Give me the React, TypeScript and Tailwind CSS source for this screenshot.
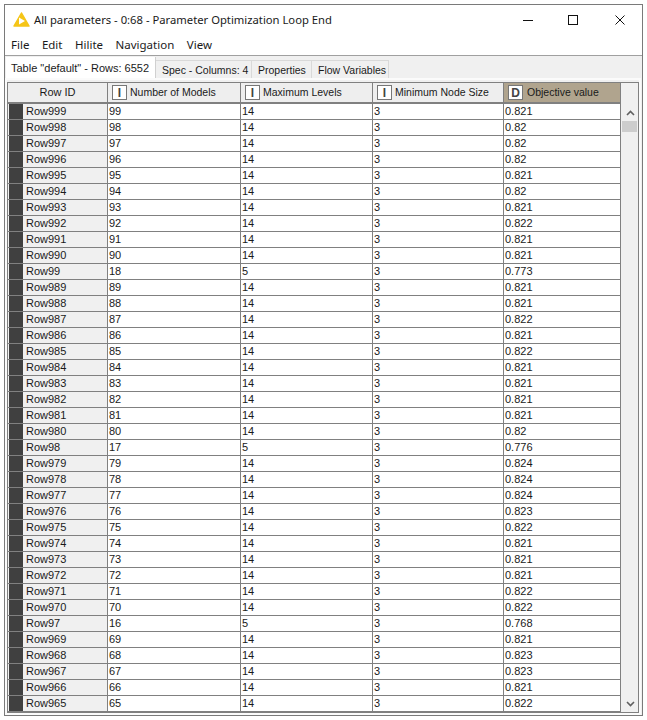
import React from 'react';

const rows: [string, string, string, string][] = [
  ['Row999', '99', '14', '0.821'],
  ['Row998', '98', '14', '0.82'],
  ['Row997', '97', '14', '0.82'],
  ['Row996', '96', '14', '0.82'],
  ['Row995', '95', '14', '0.821'],
  ['Row994', '94', '14', '0.82'],
  ['Row993', '93', '14', '0.821'],
  ['Row992', '92', '14', '0.822'],
  ['Row991', '91', '14', '0.821'],
  ['Row990', '90', '14', '0.821'],
  ['Row99', '18', '5', '0.773'],
  ['Row989', '89', '14', '0.821'],
  ['Row988', '88', '14', '0.821'],
  ['Row987', '87', '14', '0.822'],
  ['Row986', '86', '14', '0.821'],
  ['Row985', '85', '14', '0.822'],
  ['Row984', '84', '14', '0.821'],
  ['Row983', '83', '14', '0.821'],
  ['Row982', '82', '14', '0.821'],
  ['Row981', '81', '14', '0.821'],
  ['Row980', '80', '14', '0.82'],
  ['Row98', '17', '5', '0.776'],
  ['Row979', '79', '14', '0.824'],
  ['Row978', '78', '14', '0.824'],
  ['Row977', '77', '14', '0.824'],
  ['Row976', '76', '14', '0.823'],
  ['Row975', '75', '14', '0.822'],
  ['Row974', '74', '14', '0.821'],
  ['Row973', '73', '14', '0.821'],
  ['Row972', '72', '14', '0.821'],
  ['Row971', '71', '14', '0.822'],
  ['Row970', '70', '14', '0.822'],
  ['Row97', '16', '5', '0.768'],
  ['Row969', '69', '14', '0.821'],
  ['Row968', '68', '14', '0.823'],
  ['Row967', '67', '14', '0.823'],
  ['Row966', '66', '14', '0.821'],
  ['Row965', '65', '14', '0.822'],
];

const TypeBox = ({ letter }: { letter: string }) => (
  <span className="flex h-[15px] w-[15px] shrink-0 items-center justify-center border border-[#777] bg-white text-[12px] font-bold leading-none text-[#444]">
    {letter}
  </span>
);

const HeaderCell = ({ letter, label, width, active }: { letter: string; label: string; width: string; active?: boolean }) => (
  <div
    className={`flex h-[21px] shrink-0 items-center border-r border-b-2 border-[#808080] pl-[4px] text-[10.5px] ${width} ${active ? 'gap-[4px] bg-[#b0a48e]' : 'gap-[3px] bg-[#eeeeee]'}`}
  >
    <TypeBox letter={letter} />
    <span className="-mt-[2px] whitespace-nowrap">{label}</span>
  </div>
);

const App = () => {
  return (
    <div className="h-[720px] w-[647px] overflow-hidden bg-white pt-1 pl-1 text-[11px] leading-4 text-[#1a1a1a] [font-family:'Liberation_Sans',Arial,sans-serif]">
      <div className="h-[712px] w-[639px] overflow-hidden border border-[#7a7a7a] bg-[#f0f0f0]">
        {/* title bar */}
        <div className="flex h-[29px] items-center bg-white pl-[8px]">
          <svg width="17" height="15" viewBox="0 0 17 15" className="mt-[-1px] shrink-0">
            <path d="M8.5 1 L16 14 H1 Z" fill="#f5c518" stroke="#f5c518" strokeWidth="1.5" strokeLinejoin="round" />
            <path d="M6 5.5 L12 9 L6 12.5 Z" fill="#fff" />
          </svg>
          <span className="ml-[4px] text-[11.25px] [font-family:'Noto_Sans',sans-serif]">All parameters - 0:68 - Parameter Optimization Loop End</span>
          <div className="ml-auto flex items-center pr-[17px]">
            <svg width="10" height="10" viewBox="0 0 10 10" className="mr-[35px]">
              <path d="M0 5.5 H10" stroke="#111" strokeWidth="1" />
            </svg>
            <svg width="10" height="10" viewBox="0 0 10 10" className="mr-[37px]">
              <rect x="0.5" y="0.5" width="9" height="9" fill="none" stroke="#111" />
            </svg>
            <svg width="10" height="10" viewBox="0 0 10 10">
              <path d="M0.5 0.5 L9.5 9.5 M9.5 0.5 L0.5 9.5" stroke="#111" />
            </svg>
          </div>
        </div>
        {/* menu */}
        <div className="flex h-[22px] items-center gap-[12.5px] border-b border-[#a0a0a0] bg-white pt-[1px] pl-[6px] text-[11.5px] [font-family:'Noto_Sans',sans-serif]">
          <span>File</span>
          <span>Edit</span>
          <span>Hilite</span>
          <span>Navigation</span>
          <span>View</span>
        </div>
        {/* tabs */}
        <div className="flex h-[22px] items-end pl-[1px]">
          <div className="flex h-[21px] w-[150px] items-center border-r border-[#d0d0d0] bg-white pl-[5px]">
            Table "default" - Rows: 6552
          </div>
          <div className="flex h-[18px] w-[96px] items-center border-t border-r border-[#d9d9d9] pt-[1px] pl-[6px] text-[10.5px]">Spec - Columns: 4</div>
          <div className="flex h-[18px] w-[60px] items-center border-t border-r border-[#d9d9d9] pt-[1px] pl-[6px] text-[10.5px]">Properties</div>
          <div className="flex h-[18px] w-[77px] items-center border-t border-r border-[#d9d9d9] pt-[1px] pl-[6px] text-[10.5px]">Flow Variables</div>
        </div>
        {/* tab pane */}
        <div className="mr-[1px] border-2 border-[#fbfbfb] pt-[2px]">
          <div className="flex w-[632px] border border-[#808080] bg-[#f0f0f0]">
            <div className="w-[613px] shrink-0">
              <div className="flex">
                <div className="flex h-[21px] w-[100px] shrink-0 items-center justify-center border-r border-b-2 border-[#808080] bg-[#eeeeee] pb-[2px]">
                  Row ID
                </div>
                <HeaderCell letter="I" label="Number of Models" width="w-[133px]" />
                <HeaderCell letter="I" label="Maximum Levels" width="w-[132px]" />
                <HeaderCell letter="I" label="Minimum Node Size" width="w-[131px]" />
                <HeaderCell letter="D" label="Objective value" width="w-[117px]" active />
              </div>
              {rows.map(([id, models, levels, value]) => (
                <div key={id} className="flex h-[16px] border-b border-[#808080] bg-white leading-[15px]">
                  <div className="flex w-[100px] shrink-0 border-r border-[#808080] bg-[#f0f0f0] pl-[1px]">
                    <span className="h-[15px] w-[14px] shrink-0 bg-[#404040]" />
                    <span className="pl-[3px]">{id}</span>
                  </div>
                  <div className="w-[133px] shrink-0 border-r border-[#808080] pl-[1px]">{models}</div>
                  <div className="w-[132px] shrink-0 border-r border-[#808080] pl-[1px]">{levels}</div>
                  <div className="w-[131px] shrink-0 border-r border-[#808080] pl-[1px]">3</div>
                  <div className="w-[117px] shrink-0 border-r border-[#808080] pl-[1px]">{value}</div>
                </div>
              ))}
            </div>
            {/* scrollbar */}
            <div className="relative flex-1 bg-[#f0f0f0]">
              <svg width="9" height="6" viewBox="0 0 9 6" className="absolute top-[27px] left-[5px]">
                <path d="M1 5 L4.5 1.5 L8 5" fill="none" stroke="#606060" strokeWidth="1.6" />
              </svg>
              <div className="absolute top-[38px] left-[1px] h-[11px] w-[15px] bg-[#cdcdcd]" />
              <svg width="9" height="6" viewBox="0 0 9 6" className="absolute bottom-[5px] left-[5px]">
                <path d="M1 1 L4.5 4.5 L8 1" fill="none" stroke="#606060" strokeWidth="1.6" />
              </svg>
            </div>
          </div>
        </div>
      </div>
    </div>
  );
};

export default App;
